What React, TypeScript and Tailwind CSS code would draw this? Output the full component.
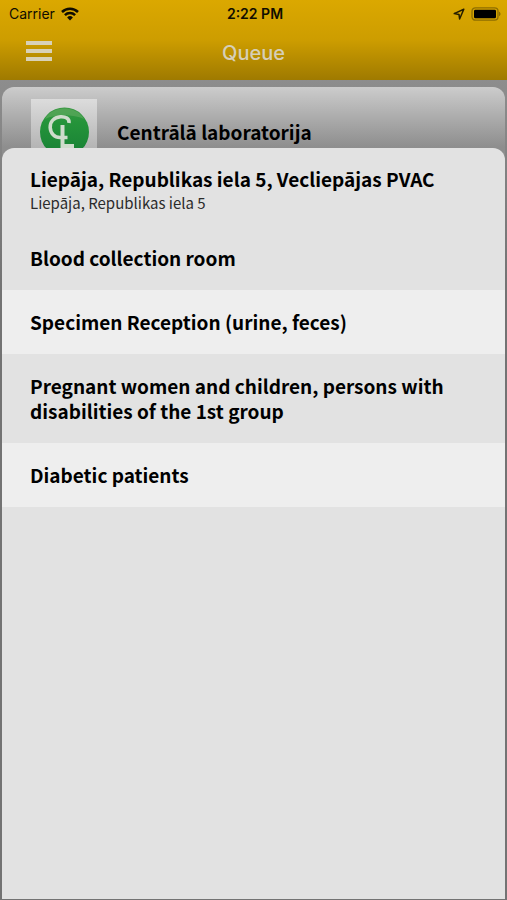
import React from 'react';

const rooms = [
  'Blood collection room',
  'Specimen Reception (urine, feces)',
  'Pregnant women and children, persons with disabilities of the 1st group',
  'Diabetic patients',
];

const WifiIcon = () => (
  <svg width="18" height="14" viewBox="0 0 18 14" fill="none" stroke="#100d00" strokeWidth="2.5" aria-hidden="true">
    <path d="M1 5a11.400 11.400 0 0 1 16 0" />
    <path d="M3.900 8.100a7.300 7.300 0 0 1 10.200 0" />
    <path d="M9 13.400 6.100 10.500a4.100 4.100 0 0 1 5.800 0Z" fill="#100d00" stroke="none" />
  </svg>
);

const LocationIcon = () => (
  <svg width="12" height="12" viewBox="0 0 12 12" fill="none" stroke="#241d00" strokeWidth="1.5" strokeLinejoin="round" aria-hidden="true">
    <path d="M10.800 1.200 1.200 5.600 6 6.400l.6 4.600Z" />
  </svg>
);

const BatteryIcon = () => (
  <svg width="30" height="14" viewBox="0 0 30 14" aria-hidden="true">
    <rect x="1" y="0.8" width="26" height="12.400" rx="3.400" fill="none" stroke="#8d6e00" strokeWidth="1.3" />
    <rect x="3" y="2.700" width="22" height="8.600" rx="1.400" fill="#000" />
    <path d="M28 4.800c2 .7 2 3.700 0 4.400Z" fill="#8d6e00" />
  </svg>
);

const LabLogo = () => (
  <svg width="66" height="66" viewBox="0 0 66 66" className="shrink-0" aria-hidden="true">
    <defs>
      <linearGradient id="tile" x1="0" y1="0" x2="0" y2="1">
        <stop offset="0" stopColor="#dcdcdc" />
        <stop offset="0.75" stopColor="#b4b4b4" />
      </linearGradient>
      <linearGradient id="ball" x1="0" y1="0" x2="0" y2="1">
        <stop offset="0" stopColor="#3c9a45" />
        <stop offset="0.3" stopColor="#25943a" />
        <stop offset="1" stopColor="#178035" />
      </linearGradient>
    </defs>
    <rect width="66" height="66" fill="url(#tile)" />
    <circle cx="33.500" cy="33" r="24.500" fill="url(#ball)" />
    <path d="M14 20C21 6 46 6 53 20C42 15 25 15 14 20Z" fill="#6caf68" opacity="0.5" />
    <path d="M38 24C38.500 19.500 34.500 17.500 29.500 17.800C22.500 18.500 19 23 19.200 28.500C19.500 34.500 23.500 38.500 29 38.500H36.500" fill="none" stroke="#cfdccc" strokeWidth="3.600" />
    <path d="M31.500 26V47H43" fill="none" stroke="#cfdccc" strokeWidth="4" />
  </svg>
);

const App: React.FC = () => {
  return (
    <div className="min-h-screen flex flex-col bg-[#737373] font-['Noto_Sans_CJK_JP','Noto_Sans',sans-serif] text-black">
      <header className="bg-linear-to-b from-[#dba800] via-[#cd9d00] to-[#9f7a00] font-['Inter',sans-serif]">
        <div className="grid grid-cols-3 items-center h-7 pl-[9px] pr-1.5 text-sm text-[#100d00]">
          <div className="flex items-center gap-1.5">
            <span>Carrier</span>
            <WifiIcon />
          </div>
          <span className="text-center font-semibold">2:22 PM</span>
          <div className="flex items-center justify-end gap-1.5">
            <LocationIcon />
            <BatteryIcon />
          </div>
        </div>
        <div className="grid grid-cols-3 items-center h-[52px] px-[26px] pb-[3px]">
          <button type="button" aria-label="Menu" className="flex flex-col gap-1 w-[26px] pb-1">
            <span className="h-1 bg-[#d8d1b8]"></span>
            <span className="h-1 bg-[#d8d1b8]"></span>
            <span className="h-1 bg-[#d8d1b8]"></span>
          </button>
          <h1 className="text-center text-xl font-medium text-[#d6cfb8]">Queue</h1>
        </div>
      </header>

      <main className="flex-1 flex flex-col px-[2px] pt-[7px] pb-px bg-linear-to-b from-[#8d8d8d] to-[#737373] to-25%">
        <section className="flex items-start gap-5 h-20 pl-[29px] pt-3 rounded-t-xl overflow-hidden bg-linear-to-b from-[#cccccc] to-[#8e8e8e] to-75%">
          <LabLogo />
          <h2 className="pt-5 text-[19px] leading-[25px] font-bold">Centrālā laboratorija</h2>
        </section>

        <section className="relative flex-1 -mt-[19px] rounded-t-xl bg-[#e2e2e2]">
          <div className="px-7 pt-[18px] pb-[11px]">
            <h2 className="text-[19px] leading-[25px] font-bold">Liepāja, Republikas iela 5, Vecliepājas PVAC</h2>
            <p className="text-[15px] leading-6 text-[#2b2b2b]">Liepāja, Republikas iela 5</p>
          </div>
          <ul>
            {rooms.map((room) => (
              <li key={room} className="even:bg-[#eeeeee]">
                <button type="button" className="block w-full px-7 pt-[19px] pb-5 text-left text-[19px] leading-[25px] font-bold">
                  {room}
                </button>
              </li>
            ))}
          </ul>
        </section>
      </main>
    </div>
  );
};

export default App;
